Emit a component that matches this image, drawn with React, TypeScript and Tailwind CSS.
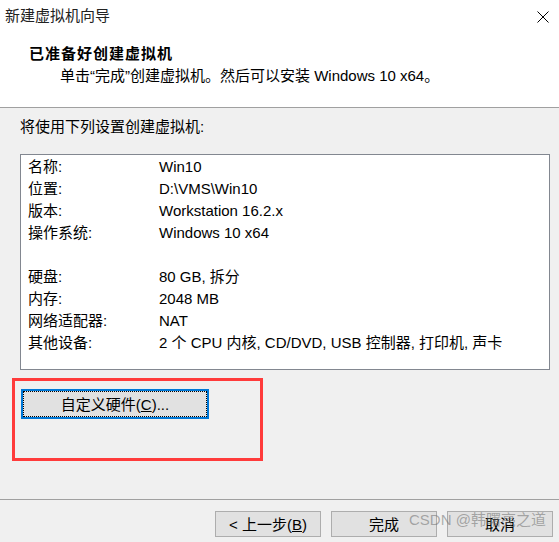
import React from 'react'

const rows: [string, string][] = [
  ['名称:', 'Win10'],
  ['位置:', 'D:\\VMS\\Win10'],
  ['版本:', 'Workstation 16.2.x'],
  ['操作系统:', 'Windows 10 x64'],
  ['', ''],
  ['硬盘:', '80 GB, 拆分'],
  ['内存:', '2048 MB'],
  ['网络适配器:', 'NAT'],
  ['其他设备:', '2 个 CPU 内核, CD/DVD, USB 控制器, 打印机, 声卡'],
]

function WizardButton({ children }: { children: React.ReactNode }) {
  return (
    <button className="w-[106px] h-[26px] bg-[#e1e1e1] border border-[#adadad] text-[15px] leading-none text-black">
      {children}
    </button>
  )
}

export default function App() {
  return (
    <div
      className="relative w-[559px] h-[542px] overflow-hidden bg-[#f0f0f0] text-[15px] text-black"
      style={{ fontFamily: '"Liberation Sans", "Noto Sans CJK SC", sans-serif' }}
    >
      {/* header */}
      <div className="h-[107px] bg-white">
        <div className="h-[33px] flex items-center justify-between pl-[5px] pr-[10px]">
          <span className="text-[15px] text-[#222]">新建虚拟机向导</span>
          <svg width="12" height="12" viewBox="0 0 12 12" className="text-black">
            <path d="M0.5 0.5 L11.5 11.5 M11.5 0.5 L0.5 11.5" stroke="currentColor" strokeWidth="1" />
          </svg>
        </div>
        <div className="mt-[10px] pl-[29px] leading-[22px] font-bold tracking-[1px]">已准备好创建虚拟机</div>
        <div className="pl-[60px] leading-[22px]">单击“完成”创建虚拟机。然后可以安装 Windows 10 x64。</div>
      </div>
      <div className="h-px bg-[#a0a0a0]" />

      {/* body */}
      <div className="h-[391px] px-[20px] pt-[8px]">
        <div className="leading-[22px]">将使用下列设置创建虚拟机:</div>
        <div className="mt-[16px] w-[530px] h-[216px] bg-white border border-[#828790] pt-px pl-[7px]">
          {rows.map(([label, value], i) => (
            <div key={i} className="flex h-[22px] items-center">
              <span className="w-[131px] shrink-0">{label}</span>
              <span>{value}</span>
            </div>
          ))}
        </div>
        <button className="mt-[19px] ml-px w-[188px] h-[30px] bg-[#e1e1e1] border-2 border-[#0078d7] outline-1 outline-dotted outline-black outline-offset-[-3px] text-[15px] leading-none">
          自定义硬件(<span className="underline">C</span>)...
        </button>
      </div>
      <div className="h-px bg-[#a0a0a0]" />

      {/* footer */}
      <div className="flex justify-end gap-[10px] pt-[11px] pr-[6px]">
        <WizardButton>
          &lt; 上一步(<span className="underline">B</span>)
        </WizardButton>
        <WizardButton>完成</WizardButton>
        <WizardButton>取消</WizardButton>
      </div>

      {/* annotation + watermark overlays */}
      <div className="absolute left-[12px] top-[378px] w-[251px] h-[83px] border-[3px] border-[#ff3b3b] pointer-events-none" />
      <div className="absolute left-[409px] top-[509px] text-[15px] leading-[22px] text-[rgba(110,110,110,0.55)] pointer-events-none whitespace-nowrap">
        CSDN @韩曙亮之道
      </div>
    </div>
  )
}
